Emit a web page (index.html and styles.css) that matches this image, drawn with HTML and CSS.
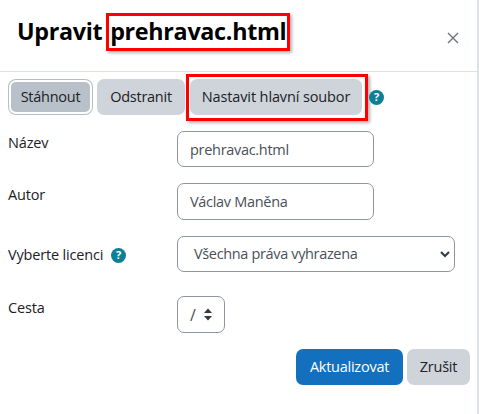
FILE: index.html
```html
<!DOCTYPE html>
<html lang="cs">
<head>
<meta charset="utf-8">
<title>Upravit prehravac.html</title>
<link rel="stylesheet" href="styles.css">
</head>
<body>
<div class="dialog">
  <header class="head">
    <h1 class="title">Upravit <span class="mark">prehravac.html</span></h1>
    <span class="close">
      <svg width="12" height="12" viewBox="0 0 12 12"><path d="M1 1l10 10M11 1L1 11" stroke="#6a737b" stroke-width="1.4" fill="none"/></svg>
    </span>
  </header>
  <div class="content">
    <div class="actions">
      <button class="btn focus">Stáhnout</button>
      <button class="btn remove">Odstranit</button>
      <span class="mark-btn"><button class="btn">Nastavit hlavní soubor</button></span>
      <span class="help"><svg width="15" height="15" viewBox="0 0 15 15"><circle cx="7.5" cy="7.5" r="7.5" fill="#0f7f96"/><text x="7.5" y="11.4" text-anchor="middle" class="q">?</text></svg></span>
    </div>
    <div class="row r1"><label class="lab">Název</label><input class="field" value="prehravac.html"></div>
    <div class="row r2"><label class="lab">Autor</label><input class="field" value="Václav Maněna"></div>
    <div class="row r3"><label class="lab">Vyberte licenci <span class="help small"><svg width="15" height="15" viewBox="0 0 15 15"><circle cx="7.5" cy="7.5" r="7.5" fill="#0f7f96"/><text x="7.5" y="11.4" text-anchor="middle" class="q">?</text></svg></span></label>
      <div class="select">Všechna práva vyhrazena
        <svg class="chev" width="12" height="12" viewBox="0 0 12 12"><path d="M2 4l4 4 4-4" stroke="#343a40" stroke-width="2" fill="none"/></svg>
      </div>
    </div>
    <div class="row r4"><label class="lab">Cesta</label>
      <div class="path"><span class="slash">/</span>
        <svg width="8" height="13" viewBox="0 0 8 13"><path d="M4 0.5L8 5H0zM4 12.5L0 8h8z" fill="#343a40"/></svg>
      </div>
    </div>
    <div class="foot">
      <button class="btn primary">Aktualizovat</button>
      <button class="btn">Zrušit</button>
    </div>
  </div>
</div>
</body>
</html>
```
FILE: styles.css
```css
* { box-sizing: border-box; }
html, body { margin: 0; height: 100%; background: #fff; }
body { font-family: "Open Sans", "Noto Sans", sans-serif; color: #1d2125; overflow: hidden; }
.dialog { width: 479px; height: 414px; border-right: 2px solid #dee2e6; }
.head { height: 72px; border-bottom: 1px solid #dee2e6; display: flex; align-items: flex-start; padding: 13px 18px 0 17px; justify-content: space-between; }
.title { margin: 0; font-size: 23.3px; line-height: 37px; font-weight: 700; color: #000; letter-spacing: -0.3px; white-space: nowrap; }
.mark { display: inline-block; border: 3px solid #f00; box-shadow: 2px 2px 3px rgba(0,0,0,.3); padding: 0 1px 0 1px; height: 38px; line-height: 31px; margin-left: -2px; }
.close { margin-top: 19px; height: 12px; line-height: 0; }
.content { padding: 7px 8px 0 8px; }
.actions { display: flex; align-items: center; height: 36px; gap: 4px; }
.btn { height: 36px; border: 0; border-radius: 7px; background: #ced4da; color: #1d2125; font: 14.5px/1 "Open Sans", "Noto Sans", sans-serif; letter-spacing: -0.25px; padding: 0 13px; }
.focus { background: #b8c1ca; width: 79px; height: 30px; padding: 0; margin: 3px; box-shadow: 0 0 0 2px #fff, 0 0 0 3px #b5bdc6; border-radius: 5px; }
.remove { width: 88px; padding: 0; }
.mark-btn { display: inline-flex; border: 3px solid #f00; padding: 0 3px 0 1px; height: 47px; align-items: center; box-shadow: 2px 2px 3px rgba(0,0,0,.3); margin-left: -3px; margin-right: -3px; }
.mark-btn .btn { width: 172px; padding: 0; letter-spacing: -0.12px; }
.help { display: inline-flex; }
.help.small { vertical-align: -3px; margin-left: 4px; }
.q { font: 700 11px "Open Sans", sans-serif; fill: #fff; }
.row { display: flex; align-items: flex-start; }
.lab { width: 169px; font-size: 14.5px; letter-spacing: -0.17px; line-height: 20px; flex: none; }
.r1 { margin-top: 16px; height: 36px; } .r1 .lab { margin-top: 2px; }
.r2 { margin-top: 16px; height: 37px; } .r2 .lab { margin-top: 2px; }
.r3 { margin-top: 16px; height: 36px; } .r3 .lab { margin-top: 9px; }
.r4 { margin-top: 24px; height: 37px; } .r4 .lab { margin-top: 2px; }
.field { width: 197px; height: 100%; border: 1px solid #8f959e; border-radius: 7px; padding: 0 12px; font: 14.5px "Open Sans", "Noto Sans", sans-serif; letter-spacing: -0.3px; color: #495057; background: #fff; outline: 0; }
.select { width: 278px; height: 100%; border: 1px solid #8f959e; border-radius: 7px; padding-left: 16px; font-size: 14.5px; letter-spacing: -0.35px; line-height: 34px; color: #495057; display: flex; justify-content: space-between; align-items: center; padding-right: 3px; }
.path { width: 48px; height: 100%; border: 1px solid #8f959e; border-radius: 7px; display: flex; align-items: center; padding-left: 12px; gap: 8px; color: #495057; font-size: 16px; }
.foot { display: flex; justify-content: flex-end; gap: 4px; margin-top: 16px; margin-right: -1px; }
.foot .btn { width: 63px; padding: 0; }
.foot .primary { width: 107px; background: #1270bf; color: #fff; }
```
